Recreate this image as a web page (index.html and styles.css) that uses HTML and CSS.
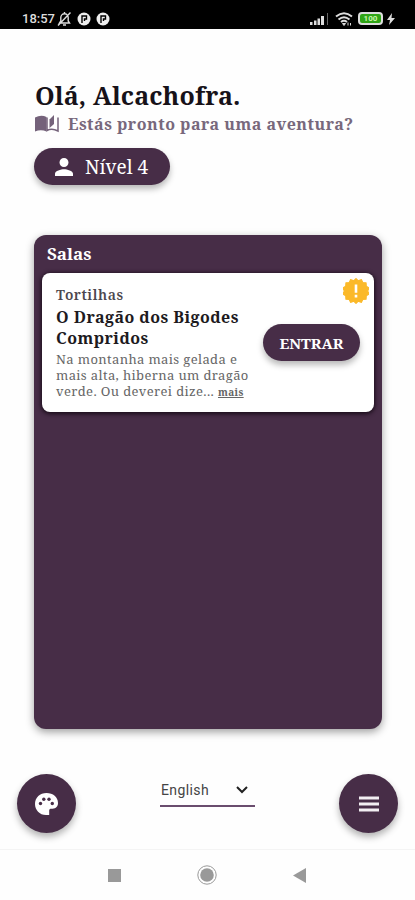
FILE: index.html
```
<!DOCTYPE html>
<html lang="pt">
	<head>
		<meta charset="UTF-8">
		<title>Salas</title>
		<link rel="stylesheet" href="styles.css">
	</head>
	<body>
		<div class="status">
			<span class="time">18:57</span>
			<svg class="bell" width="15" height="16" viewBox="0 0 15 16" fill="none" stroke="#ddd" stroke-width="1.4">
				<path d="M2.500 12h10l-1.300-2V6.500a3.700 3.700 0 0 0-7.400 0V10zM6 14h3M1 14.500L13.500 1.500M7.500 1v2"/>
			</svg>
			<svg class="dot" width="14" height="14" viewBox="0 0 14 14">
				<circle cx="7" cy="7" r="6.500" fill="#eee"/>
				<path d="M5 11V4h4.500v3H7.500V9" fill="none" stroke="#000" stroke-width="1.400"/>
			</svg>
			<svg class="dot" width="14" height="14" viewBox="0 0 14 14">
				<circle cx="7" cy="7" r="6.500" fill="#eee"/>
				<path d="M5 11V4h4.500v3H7.500V9" fill="none" stroke="#000" stroke-width="1.400"/>
			</svg>
			<svg class="signal" width="19" height="13" viewBox="0 0 19 13">
				<path d="M0 10h2.500v3H0zM4 8.500h2.500V13H4zM7.500 6.500H10V13H7.500zM11 4h3v9h-3z" fill="#ddd"/>
				<path d="M17 1h1v12h-1z" fill="#666"/>
			</svg>
			<svg class="wifi" width="18" height="14" viewBox="0 0 18 14" fill="none" stroke="#ddd" stroke-width="2">
				<path d="M1 4.500q8-6.500 16 0M3.500 7.500q5.500-4.500 11 0M6 10q3-2.400 6 0"/>
				<path d="M7.500 11.500h3L9 13.500zM13 10.500v3M15.500 11v2.500" fill="#ddd" stroke-width="1"/>
			</svg>
			<span class="battery">100</span>
			<svg class="bolt" width="8" height="12" viewBox="0 0 8 12"><path d="M5 0L0 7h3L2 12l6-7H4.500z" fill="#ddd"/></svg>
		</div>

		<div class="page">
			<h1 class="hello">Olá, Alcachofra.</h1>
			<div class="sub">
				<svg class="book" width="24" height="18" viewBox="0 0 24 18">
					<path d="M0 2.500Q6-.5 11.500 2V16.500Q6 14 0 16.500z" fill="#74627a"/>
					<path d="M12 2.500V15.500Q17 13 23 16V2.500" fill="none" stroke="#74627a" stroke-width="1.500"/>
					<path d="M14.500 4.500L19 0v9l-4.500 4z" fill="#74627a"/>
				</svg>
				<span>Estás pronto para uma aventura?</span>
			</div>
			<div class="level">
				<svg width="18" height="18" viewBox="4 4 16 16" fill="#fff"><path d="M12 12c2.210 0 4-1.790 4-4s-1.790-4-4-4-4 1.790-4 4 1.790 4 4 4zm0 2c-2.670 0-8 1.340-8 4v2h16v-2c0-2.660-5.330-4-8-4z"/></svg>
				<span>Nível 4</span>
			</div>

			<div class="rooms">
				<h2 class="rooms-title">Salas</h2>
				<div class="card">
					<div class="info">
						<div class="owner">Tortilhas</div>
						<div class="title">O Dragão dos Bigodes<br>Compridos</div>
						<div class="text">
							<p>Na montanha mais gelada e</p>
							<p>mais alta, hiberna um dragão</p>
							<p>verde. Ou deverei dize... <a class="more">mais</a></p>
						</div>
					</div>
					<div class="enter">ENTRAR</div>
					<svg class="alert" width="26" height="26" viewBox="1 1 22 22"><path fill="#fbb929" stroke="#fbb929" stroke-linejoin="round" d="M12 1.500l2 1.900 2.600-1 1.100 2.500 2.800.2.200 2.800 2.300 1.500-1.100 2.600 1.100 2.600-2.300 1.500-.2 2.800-2.800.2-1.100 2.500-2.600-1-2 1.900-2-1.900-2.600 1-1.100-2.500-2.800-.2-.2-2.800L1 14.600 2.100 12 1 9.400l2.300-1.500.2-2.800 2.800-.2 1.100-2.500 2.600 1z"/><path fill="#fff" d="M10.900 6.500h2.200v7h-2.200zM10.900 15.200h2.200v2.200h-2.200z"/></svg>
				</div>
			</div>
		</div>

		<div class="actions">
			<div class="fab">
				<svg width="23" height="22" viewBox="0 0 23 22">
					<path fill="#fff" d="M11.500 0C5 0 0 4.500 0 11c0 6 4.500 11 11 11h3.200v-4.500c0-1.300.7-1.800 2-1.800h1.300c3.500 0 5.500-2.500 5.500-5.700C23 4 18 0 11.500 0z"/>
					<g fill="#472d47"><circle cx="5.500" cy="10.500" r="1.700"/><circle cx="8.800" cy="6.200" r="1.700"/><circle cx="14" cy="6.200" r="1.700"/><circle cx="17.300" cy="10.500" r="1.700"/></g>
				</svg>
			</div>
			<div class="lang">
				<span>English</span>
				<svg width="12" height="8" viewBox="0 0 12 8" fill="none" stroke="#222" stroke-width="2"><path d="M1 1l5 5 5-5"/></svg>
			</div>
			<div class="fab">
				<svg width="20" height="16" viewBox="0 0 20 16"><path d="M0 2h20M0 8h20M0 14h20" stroke="#f2eef2" stroke-width="2.800"/></svg>
			</div>
		</div>

		<div class="nav">
			<svg width="13" height="13" viewBox="0 0 13 13"><path d="M0 0h13v13H0z" fill="#999"/></svg>
			<svg width="20" height="20" viewBox="0 0 20 20"><circle cx="10" cy="10" r="9.200" fill="none" stroke="#999"/><circle cx="10" cy="10" r="6.800" fill="#999"/></svg>
			<svg width="13" height="15" viewBox="0 0 13 15"><path d="M13 0v15L0 7.500z" fill="#999"/></svg>
		</div>
	</body>
</html>
```
FILE: styles.css
```
*{
	margin: 0;
	padding: 0;
	box-sizing: border-box;
}
body{
	width: 415px;
	height: 900px;
	background-color: #fefefe;
	font-family: "Noto Serif", "DejaVu Serif Condensed", "DejaVu Serif", serif;
	white-space: nowrap;
	overflow: hidden;
	display: flex;
	flex-direction: column;
}
svg{
	display: block;
	flex: none;
}
/* 状态栏 */
.status{
	height: 29px;
	background-color: #000;
	color: #ddd;
	display: flex;
	align-items: center;
	padding: 8px 20px 0 22px;
	font-family: Roboto, sans-serif;
}
.time{
	font-size: 13px;
	font-weight: 500;
	width: 35px;
}
.dot{
	margin-left: 5px;
}
.signal{
	margin-left: auto;
}
.wifi{
	margin: 0 5px 0 6px;
}
.battery{
	width: 25px;
	height: 13px;
	border: 2px solid #ddd;
	border-radius: 4px;
	background-color: #2fa516;
	color: #c9f7ae;
	font-size: 8px;
	font-weight: 700;
	line-height: 9px;
	text-align: center;
}
.bolt{
	margin-left: 4px;
}
/* 主体 */
.page{
	height: 721px;
	padding: 49px 33px 0 34px;
}
.hello{
	font-size: 25px;
	line-height: 34px;
	letter-spacing: .13px;
	padding-left: 1px;
	color: #171219;
}
.sub{
	display: flex;
	height: 23px;
	align-items: center;
	font-size: 16px;
	font-weight: 700;
	letter-spacing: .49px;
	color: #78687c;
	padding-left: 1px;
}
.sub span{
	margin-left: 9px;
}
.level{
	margin-top: 13px;
	width: 136px;
	height: 37px;
	border-radius: 19px;
	background-color: #472d47;
	color: #fff;
	font-size: 19px;
	display: flex;
	align-items: center;
	padding-left: 21px;
	box-shadow: 0 4px 6px rgba(0,0,0,.28);
}
.level span{
	margin-left: 12px;
}
.rooms{
	margin-top: 50px;
	height: 494px;
	border-radius: 12px;
	background-color: #472d47;
	box-shadow: 0 3px 9px rgba(0,0,0,.38);
	padding: 7px 8px 0 8px;
}
.rooms-title{
	color: #fff;
	font-size: 17px;
	line-height: 24px;
	padding-left: 5px;
}
.card{
	margin-top: 7px;
	height: 139px;
	border-radius: 8px;
	background-color: #fff;
	box-shadow: 0 1px 4px 1px #190c19;
	position: relative;
	display: flex;
	justify-content: space-between;
	padding: 12px 14px 0 14px;
}
.owner{
	font-size: 14px;
	line-height: 20px;
	font-weight: 600;
	letter-spacing: .55px;
	color: #4c474e;
}
.title{
	margin-top: 2px;
	font-size: 16px;
	line-height: 21px;
	font-weight: 700;
	letter-spacing: .46px;
	color: #1d1a1e;
}
.text{
	margin-top: 2px;
	font-size: 13px;
	line-height: 16px;
	letter-spacing: .37px;
	color: #666;
}
.more{
	font-size: 10px;
	font-weight: 700;
	text-decoration: underline;
}
.enter{
	margin-top: 39px;
	width: 97px;
	height: 37px;
	border-radius: 19px;
	background-color: #472d47;
	color: #fff;
	font-size: 15px;
	font-weight: 700;
	display: flex;
	align-items: center;
	justify-content: center;
	box-shadow: 0 4px 6px rgba(0,0,0,.28);
}
.alert{
	position: absolute;
	right: 5px;
	top: 5px;
}
/* 底部按钮 */
.actions{
	height: 100px;
	padding: 24px 17px 0 17px;
	display: flex;
	justify-content: space-between;
	border-bottom: 1px solid #f4f4f4;
}
.fab{
	width: 59px;
	height: 59px;
	border-radius: 50%;
	background-color: #472d47;
	display: flex;
	align-items: center;
	justify-content: center;
	box-shadow: 0 4px 7px rgba(0,0,0,.3);
}
.lang{
	width: 95px;
	height: 33px;
	border-bottom: 2px solid #6a4d6e;
	font-family: Roboto, sans-serif;
	font-size: 14px;
	letter-spacing: .4px;
	color: #444;
	display: flex;
	align-items: center;
	justify-content: space-between;
	padding: 0 7px 0 1px;
}
/* 导航栏 */
.nav{
	height: 50px;
	display: flex;
	align-items: center;
	justify-content: space-between;
	padding: 0 109px 0 108px;
}
```
